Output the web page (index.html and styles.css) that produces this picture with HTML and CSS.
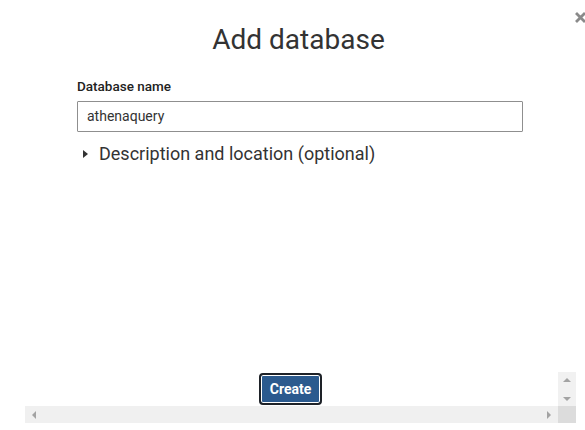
FILE: index.html
```html
<!DOCTYPE html>
<html>
<head>
<meta charset="utf-8">
<link rel="stylesheet" href="styles.css">
</head>
<body>
<div class="page">
  <button class="close" aria-label="Close">
    <svg width="11" height="11" viewBox="0 0 11 11"><path d="M2 2 L9 9 M9 2 L2 9" stroke="#8a8a8a" stroke-width="2.8" stroke-linecap="square"/></svg>
  </button>
  <h1 class="title">Add database</h1>
  <div class="form">
    <label class="label">Database name</label>
    <div class="input">athenaquery</div>
    <div class="expander">
      <span class="caret"></span>
      <span class="exp-text">Description and location (optional)</span>
    </div>
  </div>
  <div class="spacer"></div>
  <div class="scrollarea">
    <div class="footer">
      <button class="create">Create</button>
    </div>
    <div class="vbar">
      <span class="arrow up"></span>
      <span class="arrow down"></span>
    </div>
    <div class="hbar">
      <span class="arrow left"></span>
      <span class="arrow right"></span>
    </div>
    <div class="corner"></div>
  </div>
</div>
</body>
</html>
```

FILE: styles.css
```css
* { box-sizing: border-box; }
html, body { margin: 0; padding: 0; background: #fff; }
body { font-family: Roboto, "Liberation Sans", sans-serif; color: #333; }

.page {
  position: relative;
  width: 585px;
  height: 430px;
  display: flex;
  flex-direction: column;
}

.close {
  position: absolute;
  top: 12px;
  right: -1px;
  width: 11px;
  height: 11px;
  padding: 0;
  border: 0;
  background: none;
  display: flex;
}

.title {
  margin: 22px 0 0 0;
  text-align: center;
  font-size: 28px;
  font-weight: 400;
  line-height: 36px;
  color: #333;
  padding-left: 12px;
}

.form {
  margin: 20px 0 0 77px;
  width: 446px;
  display: flex;
  flex-direction: column;
}

.label {
  font-size: 13.5px;
  font-weight: 500;
  line-height: 16px;
  color: #222;
}

.input {
  margin-top: 7px;
  height: 31px;
  border: 1px solid #8f8f8f;
  border-radius: 1px;
  padding: 0 9px;
  font-size: 14px;
  line-height: 29px;
  color: #333;
}

.expander {
  margin-top: 10px;
  display: flex;
  align-items: center;
  gap: 11px;
  padding-left: 6px;
}

.caret {
  width: 0;
  height: 0;
  border-top: 4px solid transparent;
  border-bottom: 4px solid transparent;
  border-left: 5px solid #333;
}

.exp-text {
  font-size: 18px;
  line-height: 24px;
  color: #333;
}

.spacer { flex: 1; }

.scrollarea {
  margin: 0 0 7px 25px;
  width: 551px;
  display: grid;
  grid-template-columns: 1fr 18px;
  grid-template-rows: 34px 17px;
}

.footer {
  display: flex;
  justify-content: center;
  align-items: center;
}

.create {
  height: 32px;
  width: 63px;
  padding: 0;
  border: 2px solid #1e2228;
  border-radius: 4px;
  background: #2b5a8e;
  box-shadow: inset 0 0 0 1px #fff;
  color: #fff;
  font-family: Roboto, "Liberation Sans", sans-serif;
  font-size: 14px;
  font-weight: 700;
  margin-right: 2px;
}

.vbar {
  background: #f1f1f1;
  display: flex;
  flex-direction: column;
  justify-content: space-between;
  align-items: center;
  padding: 6px 0 5px;
}

.hbar {
  background: #f0f0f0;
  display: flex;
  justify-content: space-between;
  align-items: center;
  padding: 0 7px;
}

.corner { background: #dcdcdc; }

.arrow { width: 0; height: 0; display: block; }
.arrow.up { border-left: 4px solid transparent; border-right: 4px solid transparent; border-bottom: 4px solid #a3a3a3; }
.arrow.down { border-left: 4px solid transparent; border-right: 4px solid transparent; border-top: 4px solid #a3a3a3; }
.arrow.left { border-top: 4px solid transparent; border-bottom: 4px solid transparent; border-right: 4px solid #a3a3a3; }
.arrow.right { border-top: 4px solid transparent; border-bottom: 4px solid transparent; border-left: 4px solid #a3a3a3; }
```
